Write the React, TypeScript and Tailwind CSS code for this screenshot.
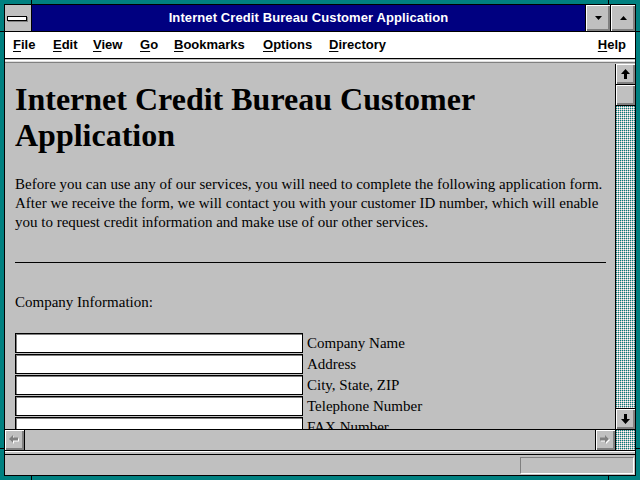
import React from "react";

const menus = [
  { label: "File", w: "w-[40px]" },
  { label: "Edit", w: "w-[40px]" },
  { label: "View", w: "w-[47px]" },
  { label: "Go", w: "w-[34px]" },
  { label: "Bookmarks", w: "w-[89px]" },
  { label: "Options", w: "w-[66px]" },
  { label: "Directory", w: "w-[80px]" },
];

const fields = ["Company Name", "Address", "City, State, ZIP", "Telephone Number", "FAX Number"];

const bevel =
  "bg-[#c0c0c0] shadow-[inset_1px_1px_0_#ffffff,inset_-1px_-1px_0_#808080,inset_-2px_-2px_0_#808080]";

const Dither = ({ id }: { id: string }) => (
  <svg width="100%" height="100%" className="block">
    <defs>
      <pattern id={id} width="2" height="2" patternUnits="userSpaceOnUse">
        <rect width="2" height="2" fill="#c0c0c0" />
        <rect width="1" height="1" fill="#008080" />
        <rect x="1" y="1" width="1" height="1" fill="#ffffff" />
      </pattern>
    </defs>
    <rect width="100%" height="100%" fill={`url(#${id})`} />
  </svg>
);

const Arrow = ({ dir }: { dir: "up" | "down" }) => (
  <svg width="9" height="10" viewBox="0 0 9 10">
    <polygon
      points={dir === "up" ? "4.5,0 9,5 6,5 6,10 3,10 3,5 0,5" : "4.5,10 9,5 6,5 6,0 3,0 3,5 0,5"}
      fill="#000"
    />
  </svg>
);

const GrayArrow = ({ dir }: { dir: "left" | "right" }) => {
  const pts = dir === "left" ? "0,4 4,0 4,2.5 9,2.5 9,5.5 4,5.5 4,8" : "9,4 5,0 5,2.5 0,2.5 0,5.5 5,5.5 5,8";
  return (
    <svg width="11" height="10" viewBox="0 0 11 10">
      <polygon points={pts} fill="#ffffff" transform="translate(1,1)" />
      <polygon points={pts} fill="#808080" />
    </svg>
  );
};

const App = () => {
  return (
    <div className="relative w-[640px] h-[480px] bg-[#008080] p-[4px] font-['Liberation_Sans',Arial,sans-serif]">
      {/* resize corner ticks */}
      <div className="absolute left-[31px] top-0 w-px h-[4px] bg-black" />
      <div className="absolute left-[608px] top-0 w-px h-[4px] bg-black" />
      <div className="absolute left-[31px] bottom-0 w-px h-[4px] bg-black" />
      <div className="absolute left-[608px] bottom-0 w-px h-[4px] bg-black" />
      <div className="absolute left-0 top-[31px] w-[4px] h-px bg-black" />
      <div className="absolute right-0 top-[31px] w-[4px] h-px bg-black" />
      <div className="absolute left-0 top-[448px] w-[4px] h-px bg-black" />
      <div className="absolute right-0 top-[448px] w-[4px] h-px bg-black" />

      <div className="h-full border border-black flex flex-col bg-[#c0c0c0]">
        {/* Title bar */}
        <div className="h-[27px] flex border-b border-black shrink-0">
          <div className="w-[27px] border-r border-black bg-[#c0c0c0] flex items-center justify-center">
            <div className="w-[20px] h-[5px] bg-white border border-black shadow-[1px_1px_0_#808080] -ml-[2px]" />
          </div>
          <div className="flex-1 bg-[#000080] text-white text-[13px] tracking-[0.1px] font-bold flex items-center justify-center">
            Internet Credit Bureau Customer Application
          </div>
          <div className="w-[25px] border-l border-black flex">
            <div className={`flex-1 flex items-center justify-center ${bevel}`}>
              <svg width="7" height="4" viewBox="0 0 7 4">
                <polygon points="0,0 7,0 3.5,4" fill="#000" />
              </svg>
            </div>
          </div>
          <div className="w-[25px] border-l border-black flex">
            <div className={`flex-1 flex items-center justify-center ${bevel}`}>
              <svg width="7" height="4" viewBox="0 0 7 4">
                <polygon points="0,4 7,4 3.5,0" fill="#000" />
              </svg>
            </div>
          </div>
        </div>

        {/* Menu bar */}
        <div className="h-[27px] shrink-0 bg-white border-b border-black flex items-center pl-[8px] pr-[9px] text-[13px] font-bold text-black">
          {menus.map((m) => (
            <div key={m.label} className={m.w}>
              <span className="underline decoration-1 underline-offset-[2px]">{m.label[0]}</span>
              {m.label.slice(1)}
            </div>
          ))}
          <div className="ml-auto">
            <span className="underline decoration-1 underline-offset-[2px]">H</span>elp
          </div>
        </div>

        {/* toolbar separator */}
        <div className="h-[5px] shrink-0 flex flex-col">
          <div className="h-px bg-[#c0c0c0]" />
          <div className="h-px bg-white" />
          <div className="h-px bg-[#dfdfdf]" />
          <div className="h-px bg-[#808080]" />
          <div className="h-px bg-[#c0c0c0]" />
        </div>

        {/* Main document + vertical scrollbar */}
        <div className="flex-1 min-h-0 flex">
          <div className="flex-1 overflow-hidden bg-[#c0c0c0] pl-[10px] pr-[9px] text-black font-['Liberation_Serif','Times_New_Roman',serif]">
            <h1 className="mt-[17px] text-[32px] leading-[36px] font-bold">
              Internet Credit Bureau Customer Application
            </h1>
            <p className="mt-[22px] text-[15px] leading-[19px]">
              Before you can use any of our services, you will need to complete the following application form.
              <br />
              After we receive the form, we will contact you with your customer ID number, which will enable
              <br />
              you to request credit information and make use of our other services.
            </p>
            <div className="mt-[30px] h-px bg-black" />
            <p className="mt-[30px] text-[15px] leading-[19px]">Company Information:</p>
            <div className="mt-[21px] flex flex-col gap-px">
              {fields.map((f) => (
                <div key={f} className="flex items-center gap-[4px] h-[20px]">
                  <div className="w-[288px] h-[20px] bg-white border border-black shadow-[inset_1px_1px_0_#808080]" />
                  <span className="text-[15px] leading-[19px] whitespace-nowrap">{f}</span>
                </div>
              ))}
            </div>
          </div>

          <div className="w-[20px] border-l border-black flex flex-col">
            <div className="h-[21px] border-b border-black flex">
              <div className={`flex-1 flex items-center justify-center ${bevel}`}>
                <Arrow dir="up" />
              </div>
            </div>
            <div className="h-[21px] border-b border-black flex">
              <div className={`flex-1 ${bevel}`} />
            </div>
            <div className="flex-1 min-h-0">
              <Dither id="vtrack" />
            </div>
            <div className="h-[21px] border-t border-black flex">
              <div className={`flex-1 flex items-center justify-center ${bevel}`}>
                <Arrow dir="down" />
              </div>
            </div>
          </div>
        </div>

        {/* Horizontal scrollbar */}
        <div className="h-[22px] shrink-0 border-y border-black flex">
          <div className="w-[20px] border-r border-black flex">
            <div className={`flex-1 flex items-center justify-center ${bevel}`}>
              <GrayArrow dir="left" />
            </div>
          </div>
          <div className="flex-1 bg-[#c0c0c0]" />
          <div className="w-[20px] border-l border-black flex">
            <div className={`flex-1 flex items-center justify-center ${bevel}`}>
              <GrayArrow dir="right" />
            </div>
          </div>
          <div className="w-[20px] border-l border-black">
            <Dither id="corner" />
          </div>
        </div>

        {/* Status bar */}
        <div className="h-[24px] shrink-0 flex flex-col">
          <div className="h-[4px] bg-[#c0c0c0] border-t border-white border-b border-b-black" />
          <div className="flex-1 flex justify-end items-start pt-[2px] pr-[1px]">
            <div className="w-[114px] h-[17px] border border-t-[#808080] border-l-[#808080] border-b-white border-r-white" />
          </div>
        </div>
      </div>
    </div>
  );
};

export default App;
